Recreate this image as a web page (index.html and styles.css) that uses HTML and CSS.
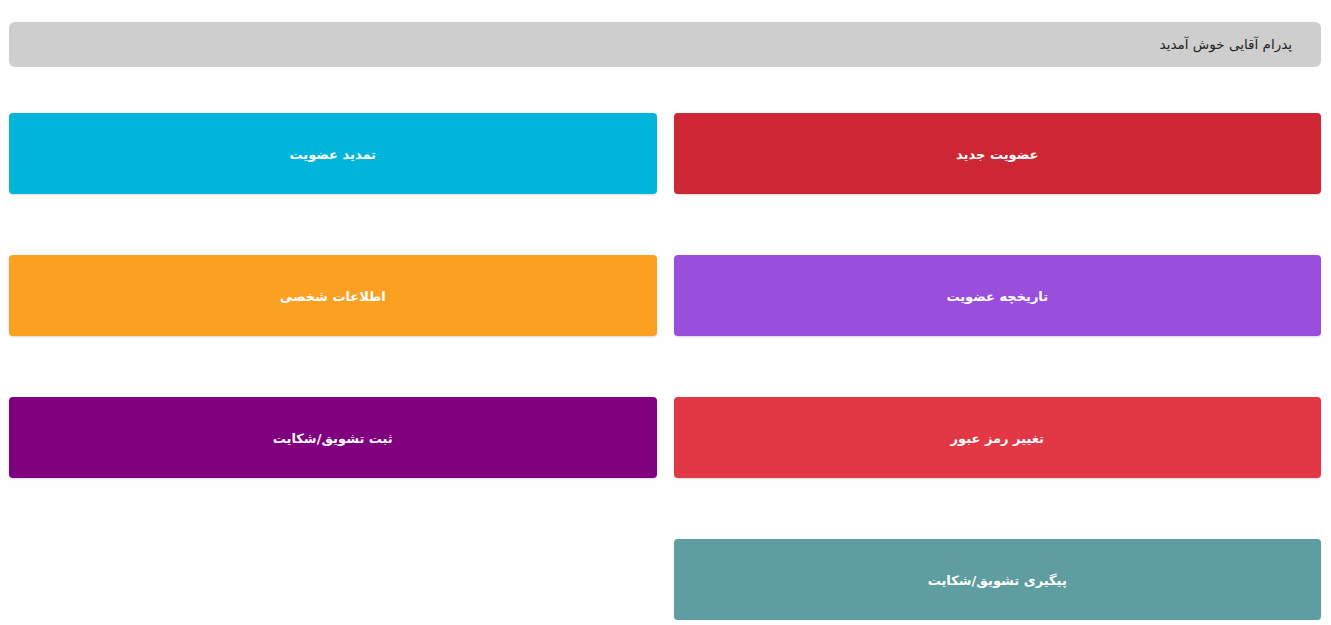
FILE: index.html
```html
<!DOCTYPE html>
<html lang="fa" dir="rtl">
<head>
  <meta charset="UTF-8" />
  <meta name="viewport" content="width=device-width, initial-scale=1.0"/>
  <title>پنل کاربری</title>
  <link rel="stylesheet" href="styles.css">
</head>
<body>
  <div class="container">
    <div class="welcome">پدرام آقایی خوش آمدید</div>

    <div class="menu">
      <a href="#" class="menu-btn new-member">عضویت جدید</a>
      <a href="#" class="menu-btn renew">تمدید عضویت</a>
      <a href="#" class="menu-btn history">تاریخچه عضویت</a>
      <a href="#" class="menu-btn profile">اطلاعات شخصی</a>
      <a href="#" class="menu-btn password">تغییر رمز عبور</a>
      <a href="#" class="menu-btn feedback">ثبت تشویق/شکایت</a>
      <a href="#" class="menu-btn tracking">پیگیری تشویق/شکایت</a>
    </div>
  </div>
</body>
</html>
```

FILE: styles.css
```css
body {
  margin: 0;
  font-family: 'DejaVu Sans', 'Noto Sans', sans-serif;
  background: #fefefe;
  color: #222;
}

.container {
  padding: 22px 10px 0 9px;
}

.welcome {
  background: #cecece;
  border-radius: 6px;
  height: 45px;
  line-height: 45px;
  padding: 0 29px;
  font-size: 13.5px;
}

.menu {
  display: grid;
  grid-template-columns: 1fr 1fr;
  column-gap: 17px;
  row-gap: 61px;
  margin-top: 46px;
}

.menu-btn {
  display: flex;
  align-items: center;
  justify-content: center;
  height: 81px;
  padding-top: 1px;
  box-sizing: border-box;
  border-radius: 4px;
  color: #fff;
  font-size: 13px;
  font-weight: bold;
  text-decoration: none;
  box-shadow: 0 1px 2px rgba(0, 0, 0, 0.15);
}

.new-member { background: #cd2735; }
.renew { background: #00b5d9; }
.history { background: #994fdc; }
.profile { background: #fba020; }
.password { background: #e23845; }
.feedback { background: #800080; }
.tracking { background: #5f9ea0; }
```
